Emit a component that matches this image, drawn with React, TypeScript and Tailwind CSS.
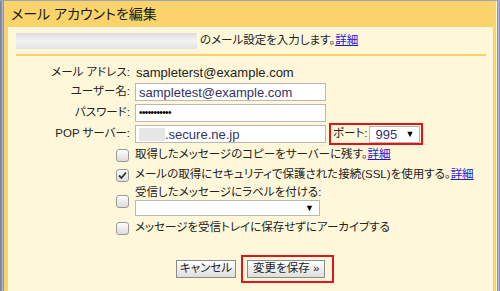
import React from "react";

const font = "font-['Liberation_Sans','Noto_Sans_CJK_JP',sans-serif] [font-feature-settings:'palt']";

function Check({ checked = false }: { checked?: boolean }) {
  return (
    <span className="flex h-[13px] w-[13px] shrink-0 items-center justify-center rounded-[3px] border border-[#9a9a9a] bg-[linear-gradient(#fdfdfd,#dcdcdc)]">
      {checked && (
        <svg width="9" height="9" viewBox="0 0 9 9">
          <path d="M1 4.5 L3.5 7 L8 1.5" fill="none" stroke="#333" strokeWidth="1.8" />
        </svg>
      )}
    </span>
  );
}

function Detail() {
  return <a className="text-[#1a1ad8] underline">詳細</a>;
}

function Row({ label, h, children }: { label: string; h: string; children: React.ReactNode }) {
  return (
    <div className={`flex items-center ${h}`}>
      <span className="w-[123px] shrink-0 pr-[1px] text-right">{label}</span>
      <div className="ml-[4px] flex items-center">{children}</div>
    </div>
  );
}

function Input({ children }: { children: React.ReactNode }) {
  return (
    <div className="flex h-[18px] w-[191px] items-center border border-[#b8b8b8] bg-white px-[3px] text-[13px] text-[#333366]">
      {children}
    </div>
  );
}

export default function App() {
  return (
    <div className={`${font} flex h-[291px] w-[500px] flex-col overflow-hidden bg-[#8b97b8] text-[11.5px] leading-none text-[#222]`}>
      <div className="h-[1px] bg-[#9aa3b8]" />
      <div className="flex flex-1">
        <div className="w-[1px] bg-[#7d8290]" />
        <div className="w-[3px] bg-[linear-gradient(90deg,#6f87c2,#a7b7dd,#6f87c2)]" />
        <div className="flex flex-1 flex-col bg-[#fad36b]">
          <div className="flex h-[26px] items-center pl-[7px] text-[14px] text-[#1a1a1a]">メール アカウントを編集</div>
          <div className="ml-[4px] mr-[3px] flex-1 bg-[#fff7da] pl-[8px] pr-[7px]">
            <div className="flex h-[27px] items-center pt-[1px]">
              <span className="h-[16px] w-[181px] bg-[linear-gradient(#dedede,#f3f3f3,#e2e2e2)]" />
              <span className="ml-[3px]">のメール設定を入力します。</span>
              <Detail />
            </div>
            <div className="h-[2px] bg-[#f9d06a]" />
            <div className="-ml-[8px] mt-[7px] flex flex-col">
              <Row label="メール アドレス:" h="h-[19px]">
                <span className="pl-[1px] text-[13px]">sampleterst@example.com</span>
              </Row>
              <Row label="ユーザー名:" h="h-[20px]">
                <Input>sampletest@example.com</Input>
              </Row>
              <Row label="パスワード:" h="h-[21px]">
                <Input>
                  <span className="text-[10px] tracking-[-0.6px] text-black">•••••••••••</span>
                </Input>
              </Row>
              <Row label="POP サーバー:" h="h-[22px]">
                <Input>
                  <span className="h-[13px] w-[26px] bg-[#e6e6e6]" />
                  <span>.secure.ne.jp</span>
                </Input>
                <div className="ml-[3px] flex h-[22px] items-center border-2 border-[#e3131b] pl-[2px] pr-[1px]">
                  <span>ポート:</span>
                  <div className="ml-[2px] flex h-[17px] w-[51px] items-center justify-between border border-[#b8b8b8] bg-white pl-[5px] pr-[5px] text-[13px] text-[#333366]">
                    <span>995</span>
                    <span className="text-[9px] text-black">▼</span>
                  </div>
                </div>
              </Row>
              <div className="ml-[108px] flex flex-col whitespace-nowrap">
                <div className="flex h-[20px] items-center gap-[6px]">
                  <Check />
                  <span>取得したメッセージのコピーをサーバーに残す。<Detail /></span>
                </div>
                <div className="flex h-[20px] items-center gap-[6px]">
                  <Check checked />
                  <span>メールの取得にセキュリティで保護された接続(SSL)を使用する。<Detail /></span>
                </div>
                <div className="flex h-[33px] items-center gap-[6px]">
                  <Check />
                  <div className="flex flex-col gap-[2px]">
                    <span>受信したメッセージにラベルを付ける:</span>
                    <div className="flex h-[16px] w-[185px] items-center justify-end border border-[#b8b8b8] bg-white pr-[5px]">
                      <span className="text-[9px] text-black">▼</span>
                    </div>
                  </div>
                </div>
                <div className="flex h-[20px] items-center gap-[6px]">
                  <Check />
                  <span>メッセージを受信トレイに保存せずにアーカイブする</span>
                </div>
              </div>
              <div className="ml-[168px] mt-[17px] flex items-center gap-[5px]">
                <button className="flex h-[18px] items-center border border-[#8a8a8a] bg-[linear-gradient(#ffffff,#dedede)] px-[3px]">
                  キャンセル
                </button>
                <div className="border-2 border-[#e3131b] py-[3px] pl-[4px] pr-[7px]">
                  <button className="flex h-[18px] items-center border border-[#8a8a8a] bg-[linear-gradient(#ffffff,#dedede)] px-[5px]">
                    変更を保存 »
                  </button>
                </div>
              </div>
            </div>
          </div>
        </div>
        <div className="w-[1px] bg-[#fff7da]" />
        <div className="w-[3px] bg-[linear-gradient(90deg,#6f87c2,#a7b7dd,#6f87c2)]" />
      </div>
    </div>
  );
}
